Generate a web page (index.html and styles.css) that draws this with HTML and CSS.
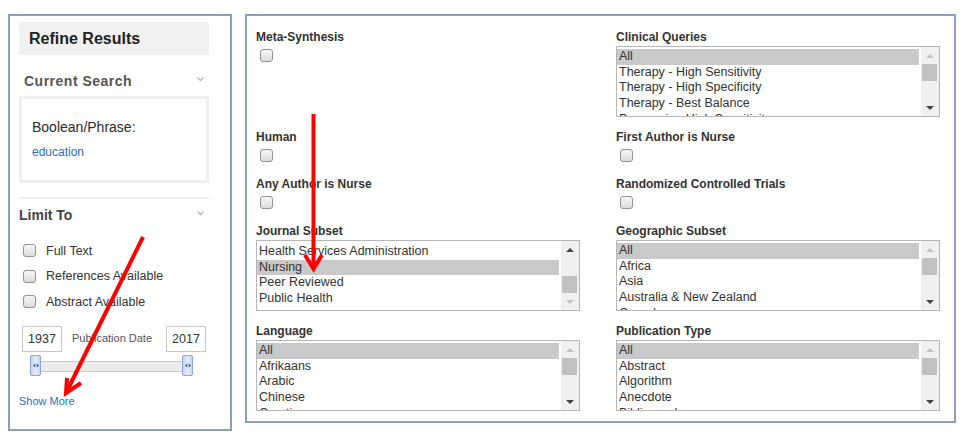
FILE: index.html
```html
<!DOCTYPE html>
<html>
<head>
    <link rel="stylesheet" href="styles.css">
</head>
<body>
    <div class="page">
        <aside class="refine">
            <div class="refine-header">Refine Results</div>

            <div class="section-title current">
                <span>Current Search</span>
                <svg class="chevron" width="7" height="5" viewBox="0 0 7 5"><polyline points="0.5,0.5 3.5,3.5 6.5,0.5" fill="none" stroke="#b5b5b5" stroke-width="1.3"/></svg>
            </div>
            <div class="search-box">
                <div class="search-label">Boolean/Phrase:</div>
                <a class="search-term" href="#">education</a>
            </div>

            <div class="divider"></div>

            <div class="section-title limit">
                <span>Limit To</span>
                <svg class="chevron" width="7" height="5" viewBox="0 0 7 5"><polyline points="0.5,0.5 3.5,3.5 6.5,0.5" fill="none" stroke="#b5b5b5" stroke-width="1.3"/></svg>
            </div>
            <div class="limit-list">
                <div class="limit-row"><span class="check"></span>Full Text</div>
                <div class="limit-row"><span class="check"></span>References Available</div>
                <div class="limit-row"><span class="check"></span>Abstract Available</div>
            </div>

            <div class="date-row">
                <span class="year">1937</span>
                <span class="date-label">Publication Date</span>
                <span class="year">2017</span>
            </div>
            <div class="slider">
                <span class="handle"><svg width="6" height="5" viewBox="0 0 6 5"><path d="M0 2.5 L2.3 0.5 V4.5 Z M6 2.5 L3.7 0.5 V4.5 Z" fill="#3d5f96"/></svg></span>
                <span class="handle"><svg width="6" height="5" viewBox="0 0 6 5"><path d="M0 2.5 L2.3 0.5 V4.5 Z M6 2.5 L3.7 0.5 V4.5 Z" fill="#3d5f96"/></svg></span>
            </div>
            <a class="show-more" href="#">Show More</a>
        </aside>

        <main class="filters">
            <div class="field">
                <div class="field-label">Meta-Synthesis</div>
                <span class="check"></span>
            </div>
            <div class="field">
                <div class="field-label">Clinical Queries</div>
                <div class="listbox">
                    <ul class="options">
                        <li class="selected">All</li>
                        <li>Therapy - High Sensitivity</li>
                        <li>Therapy - High Specificity</li>
                        <li>Therapy - Best Balance</li>
                        <li>Prognosis - High Sensitivity</li>
                    </ul>
                    <div class="scrollbar">
                        <span class="arrow up off"></span>
                        <div class="track"><span class="thumb"></span></div>
                        <span class="arrow down"></span>
                    </div>
                </div>
            </div>

            <div class="field checkbox-field">
                <div class="field-label">Human</div>
                <span class="check"></span>
            </div>
            <div class="field checkbox-field">
                <div class="field-label">First Author is Nurse</div>
                <span class="check"></span>
            </div>

            <div class="field checkbox-field">
                <div class="field-label">Any Author is Nurse</div>
                <span class="check"></span>
            </div>
            <div class="field checkbox-field">
                <div class="field-label">Randomized Controlled Trials</div>
                <span class="check"></span>
            </div>

            <div class="field">
                <div class="field-label">Journal Subset</div>
                <div class="listbox">
                    <ul class="options scrolled">
                        <li>Health Services Administration</li>
                        <li class="selected">Nursing</li>
                        <li>Peer Reviewed</li>
                        <li>Public Health</li>
                    </ul>
                    <div class="scrollbar">
                        <span class="arrow up"></span>
                        <div class="track at-end"><span class="thumb"></span></div>
                        <span class="arrow down off"></span>
                    </div>
                </div>
            </div>
            <div class="field">
                <div class="field-label">Geographic Subset</div>
                <div class="listbox">
                    <ul class="options">
                        <li class="selected">All</li>
                        <li>Africa</li>
                        <li>Asia</li>
                        <li>Australia &amp; New Zealand</li>
                        <li>Canada</li>
                    </ul>
                    <div class="scrollbar">
                        <span class="arrow up off"></span>
                        <div class="track"><span class="thumb"></span></div>
                        <span class="arrow down"></span>
                    </div>
                </div>
            </div>

            <div class="field">
                <div class="field-label">Language</div>
                <div class="listbox">
                    <ul class="options">
                        <li class="selected">All</li>
                        <li>Afrikaans</li>
                        <li>Arabic</li>
                        <li>Chinese</li>
                        <li>Croatian</li>
                    </ul>
                    <div class="scrollbar">
                        <span class="arrow up off"></span>
                        <div class="track"><span class="thumb"></span></div>
                        <span class="arrow down"></span>
                    </div>
                </div>
            </div>
            <div class="field">
                <div class="field-label">Publication Type</div>
                <div class="listbox">
                    <ul class="options">
                        <li class="selected">All</li>
                        <li>Abstract</li>
                        <li>Algorithm</li>
                        <li>Anecdote</li>
                        <li>Bibliography</li>
                    </ul>
                    <div class="scrollbar">
                        <span class="arrow up off"></span>
                        <div class="track"><span class="thumb"></span></div>
                        <span class="arrow down"></span>
                    </div>
                </div>
            </div>
        </main>
    </div>

    <!-- annotation arrows drawn over the screenshot -->
    <svg class="annotations" width="966" height="444" viewBox="0 0 966 444">
        <line x1="143" y1="237" x2="67" y2="391" stroke="#ff0000" stroke-width="4"/>
        <polyline points="67,378 66,393 81,383" fill="none" stroke="#ff0000" stroke-width="4" stroke-linejoin="miter"/>
        <line x1="313.5" y1="114" x2="313.5" y2="268" stroke="#ff0000" stroke-width="4"/>
        <polyline points="305,255 313.5,269 322,255" fill="none" stroke="#ff0000" stroke-width="4" stroke-linejoin="miter"/>
    </svg>
</body>
</html>
```

FILE: styles.css
```css
* {
    box-sizing: border-box;
}

body {
    margin: 0;
    padding: 0;
    background: #fff;
    font-family: "Liberation Sans", Arial, sans-serif;
    color: #333;
    position: relative;
    width: 966px;
    height: 444px;
    overflow: hidden;
}

.page {
    display: flex;
    align-items: flex-start;
    gap: 13px;
    padding: 14px 0 0 8px;
}

/* left column */

.refine {
    width: 224px;
    height: 417px;
    border: 2px solid #8c9fba;
    padding: 6px 21px 0 9px;
    display: flex;
    flex-direction: column;
}

.refine-header {
    height: 33px;
    line-height: 33px;
    padding-left: 10px;
    background: #f1f1f1;
    font-size: 16px;
    font-weight: bold;
    color: #222;
}

.section-title {
    display: flex;
    justify-content: space-between;
    align-items: center;
    height: 22px;
    font-size: 14px;
    font-weight: bold;
    color: #444;
}

.section-title .chevron {
    margin-right: 5px;
    margin-top: -4px;
}

.section-title.current {
    margin-top: 15px;
    padding-left: 5px;
    color: #555;
    letter-spacing: 0.5px;
}

.section-title.limit {
    margin-top: 5px;
}

.search-box {
    margin-top: 4px;
    height: 87px;
    border: 3px solid #efefef;
    padding: 20px 10px 0 10px;
}

.search-label {
    font-size: 14px;
    line-height: 16px;
    color: #2b2b2b;
}

.search-term {
    display: block;
    margin-top: 10px;
    font-size: 12px;
    line-height: 14px;
    color: #2a6ebb;
    text-decoration: none;
}

.divider {
    margin-top: 14px;
    height: 2px;
    background: #efefef;
}

.limit-list {
    margin-top: 12px;
}

.limit-row {
    display: flex;
    align-items: center;
    height: 25.5px;
    padding-left: 4px;
    font-size: 12.5px;
    color: #333;
}

.limit-row .check {
    margin-right: 10px;
}

.check {
    display: inline-block;
    width: 13px;
    height: 13px;
    border: 1px solid #929292;
    border-radius: 3px;
    background: linear-gradient(#f7f7f7, #dcdcdc);
}

.date-row {
    display: flex;
    justify-content: space-between;
    align-items: flex-start;
    margin: 11px 0 0 3px;
    width: 184px;
}

.year {
    width: 40px;
    height: 26px;
    line-height: 24px;
    border: 1px solid #c8c8c8;
    text-align: center;
    font-size: 12.5px;
    color: #333;
}

.date-label {
    font-size: 11px;
    line-height: 24px;
    color: #555;
    margin-right: 4px;
}

.slider {
    display: flex;
    justify-content: space-between;
    align-items: center;
    margin: 3px 0 0 11px;
    width: 163px;
    height: 21px;
    background: linear-gradient(#fff 0, #fff 6px, #c9c9c9 6px, #c9c9c9 7px, #ececec 7px, #ececec 16px, #c9c9c9 16px, #c9c9c9 17px, #fff 17px);
}

.handle {
    width: 11px;
    height: 21px;
    border: 1px solid #8aa7d8;
    border-radius: 2px;
    background: linear-gradient(90deg, #c5d5f2, #e4ecfb 50%, #c5d5f2);
    display: flex;
    align-items: center;
    justify-content: center;
}

.show-more {
    margin-top: 18px;
    font-size: 11px;
    line-height: 14px;
    color: #2a6ebb;
    text-decoration: none;
}

/* filter grid */

.filters {
    width: 711px;
    border: 2px solid #8c9fba;
    padding: 14px 14px 10px 9px;
    display: grid;
    grid-template-columns: 324px 324px;
    column-gap: 36px;
    row-gap: 13px;
    align-items: start;
}

.field-label {
    font-size: 12px;
    font-weight: bold;
    line-height: 14px;
    color: #333;
    margin-bottom: 2px;
}

.field .check {
    display: block;
    margin: 5px 0 0 4px;
}

.checkbox-field {
    padding-bottom: 2px;
}

.listbox {
    display: flex;
    height: 71px;
    border: 1px solid #b7b7b7;
    overflow: hidden;
}

.options {
    flex: 1;
    margin: 0;
    padding: 2px 2px 0 0;
    list-style: none;
    overflow: hidden;
}

.options.scrolled {
    padding-top: 3px;
}

.options li {
    height: 15.7px;
    line-height: 15.7px;
    padding-left: 2px;
    font-size: 12.5px;
    color: #333;
    white-space: nowrap;
}

.options li.selected {
    background: #c9c9c9;
}

.scrollbar {
    width: 18px;
    flex: none;
    background: #f0f0f0;
    display: flex;
    flex-direction: column;
}

.arrow {
    height: 17px;
    flex: none;
    position: relative;
}

.arrow::after {
    content: "";
    position: absolute;
    left: 5px;
    top: 7px;
    border-left: 4px solid transparent;
    border-right: 4px solid transparent;
}

.arrow.up::after {
    border-bottom: 4px solid #444;
}

.arrow.down::after {
    border-top: 4px solid #444;
}

.arrow.up.off::after {
    border-bottom-color: #c2c2c2;
}

.arrow.down.off::after {
    border-top-color: #c2c2c2;
}

.track {
    flex: 1;
    display: flex;
    flex-direction: column;
}

.track.at-end {
    justify-content: flex-end;
}

.thumb {
    height: 17px;
    margin: 0 2px 0 1px;
    background: #c1c1c1;
}

.annotations {
    position: absolute;
    left: 0;
    top: 0;
    pointer-events: none;
}
```
